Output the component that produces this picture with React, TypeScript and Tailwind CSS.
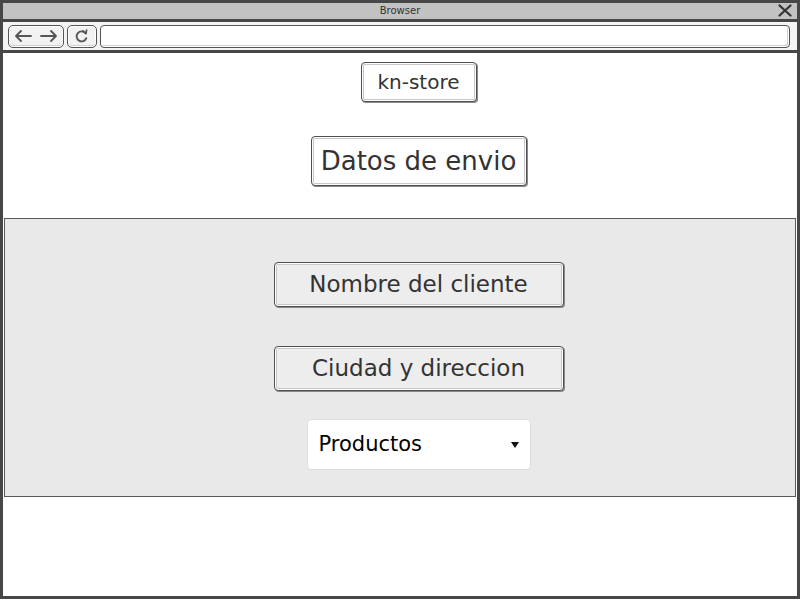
const font = "font-['Comic_Sans_MS','DejaVu_Sans',sans-serif]"

function SketchButton({ label, className }: { label: string; className: string }) {
  return (
    <div
      className={`flex items-center justify-center rounded-[4px] border border-[#505050] text-[#333] shadow-[inset_0_0_0_1px_#fdfdfd,inset_0_0_0_2px_#c8c8c8,1px_1px_0_#8a8a8a] ${className}`}
    >
      {label}
    </div>
  )
}

function ToolButton({ children, className }: { children: React.ReactNode; className: string }) {
  return (
    <div
      className={`flex h-[23px] items-center justify-center rounded-[5px] border border-[#555] bg-[#f2f2f2] shadow-[inset_0_0_0_1px_#fff,inset_0_-2px_0_#d0d0d0] ${className}`}
    >
      {children}
    </div>
  )
}

export default function App() {
  return (
    <div className={`flex h-[599px] w-[800px] flex-col border-[3px] border-[#474747] bg-white ${font}`}>
      {/* Title bar */}
      <div className="relative flex h-[19px] items-center justify-center border-b-[3px] border-[#474747] bg-[#c2c2c2] text-[10px] leading-none text-[#333]">
        <span>Browser</span>
        <svg className="absolute right-[5px] top-[1px]" width="14" height="13" viewBox="0 0 14 13">
          <path d="M1.5 1.5 L12.5 11.5 M12.5 1.5 L1.5 11.5" stroke="#333" strokeWidth="2.2" strokeLinecap="round" />
        </svg>
      </div>

      {/* Toolbar */}
      <div className="flex h-[31px] items-center gap-[3px] border-b-[3px] border-[#474747] bg-[#f4f4f4] pl-[5px] pr-[7px]">
        <ToolButton className="w-[56px] gap-[8px]">
          <svg width="18" height="12" viewBox="0 0 18 12">
            <path d="M17 6 H2 M7 1 L2 6 L7 11" fill="none" stroke="#555" strokeWidth="1.8" strokeLinecap="round" strokeLinejoin="round" />
          </svg>
          <svg width="18" height="12" viewBox="0 0 18 12">
            <path d="M1 6 H16 M11 1 L16 6 L11 11" fill="none" stroke="#555" strokeWidth="1.8" strokeLinecap="round" strokeLinejoin="round" />
          </svg>
        </ToolButton>
        <ToolButton className="w-[30px]">
          <svg width="14" height="14" viewBox="0 0 14 14">
            <path d="M10.5 4.2 A5 5 0 1 0 11.3 9.2" fill="none" stroke="#555" strokeWidth="1.9" strokeLinecap="round" />
            <path d="M8 1.8 L11 4.6 L11.6 1" fill="none" stroke="#555" strokeWidth="1.7" strokeLinecap="round" strokeLinejoin="round" />
          </svg>
        </ToolButton>
        <div className="h-[23px] flex-1 rounded-[4px] border border-[#555] bg-white shadow-[inset_0_0_0_1px_#fff,inset_-2px_-2px_0_#cfcfcf]" />
      </div>

      {/* Page */}
      <div className="flex flex-1 flex-col items-center pt-[9px]">
        <div className="flex w-full flex-col items-center pl-[37px]">
          <SketchButton label="kn-store" className="h-[40px] w-[116px] bg-white text-[20px]" />
          <SketchButton label="Datos de envio" className="mt-[34px] h-[50px] w-[216px] bg-white text-[26px]" />
        </div>

        <div className="mx-[2px] mt-[32px] flex w-[792px] flex-col items-center border-[1.5px] border-[#5a5a5a] bg-[#e9e9e9] pb-[26px] pl-[37px] pt-[43px]">
          <SketchButton label="Nombre del cliente" className="h-[45px] w-[290px] bg-[#ededed] text-[23px]" />
          <SketchButton label="Ciudad y direccion" className="mt-[39px] h-[45px] w-[290px] bg-[#ededed] text-[23px]" />
          <div className="mt-[28px] flex h-[51px] w-[224px] items-center justify-between rounded-[4px] border border-[#dcdcdc] bg-white pl-[11px] pr-[11px] text-[21px] text-black">
            <span>Productos</span>
            <svg width="8" height="6" viewBox="0 0 8 6">
              <path d="M0 0 H8 L4 6 Z" fill="#111" />
            </svg>
          </div>
        </div>
      </div>
    </div>
  )
}
